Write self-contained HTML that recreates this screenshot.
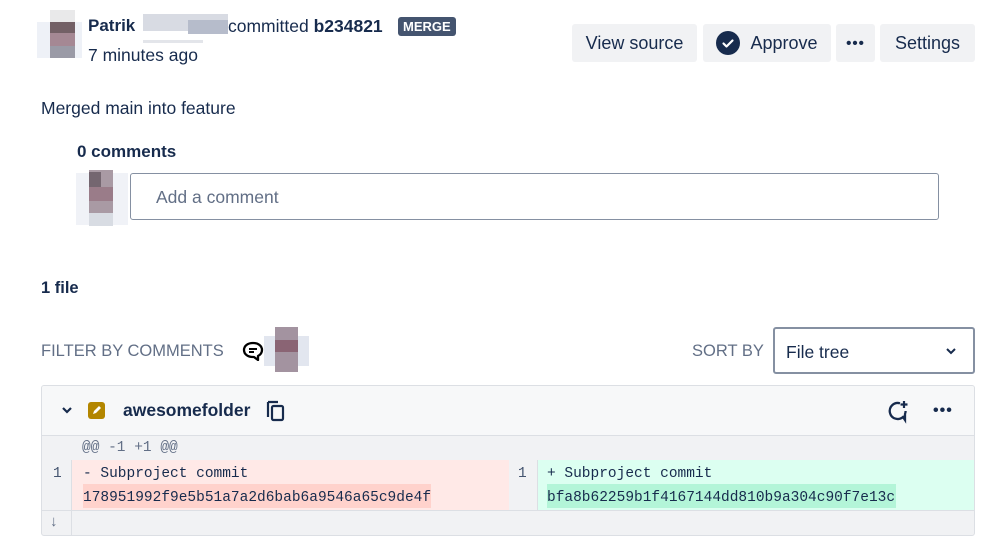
<!DOCTYPE html><html><head><meta charset="utf-8"><style>
*{box-sizing:border-box;margin:0;padding:0}
body{width:998px;height:557px;background:#fff;font-family:"Liberation Sans",sans-serif;color:#172b4d;position:relative;overflow:hidden}
.a{position:absolute}
.px{position:absolute}
.btn{position:absolute;top:24px;height:38px;background:#f1f2f4;border-radius:3px;font-size:18px;display:flex;align-items:center;justify-content:center;color:#172b4d}
.mono{font-family:"Liberation Mono",monospace;font-size:14.5px}
</style></head><body>
<div class="px" style="left:50px;top:10px;width:25px;height:12px;background:#e9e9ea"></div>
<div class="px" style="left:37px;top:22px;width:45px;height:36px;background:#eef1f7"></div>
<div class="px" style="left:50px;top:22px;width:25px;height:11px;background:#736066"></div>
<div class="px" style="left:50px;top:33px;width:25px;height:13px;background:#a58894"></div>
<div class="px" style="left:50px;top:46px;width:25px;height:12px;background:#9a9aa6"></div>
<div class="a" style="left:88px;top:16px;font-size:17px;font-weight:bold">Patrik</div>
<div class="px" style="left:143px;top:14px;width:85px;height:17px;background:#d8dbe3"></div>
<div class="px" style="left:188px;top:20px;width:40px;height:14px;background:#b6bccb"></div>
<div class="px" style="left:143px;top:40px;width:60px;height:3px;background:#e3e5ea"></div>
<div class="a" style="left:228px;top:16px;font-size:17.5px">committed <b>b234821</b></div>
<div class="a" style="left:398px;top:17px;height:19px;padding:0 5px;background:#44546f;color:#fff;border-radius:3px;font-size:13px;font-weight:bold;line-height:19px">MERGE</div>
<div class="a" style="left:88px;top:45px;font-size:17.5px">7 minutes ago</div>
<div class="btn" style="left:572px;width:125px">View source</div>
<div class="btn" style="left:703px;width:128px"><svg width="24" height="24" viewBox="0 0 24 24" style="margin-right:10px"><circle cx="12" cy="12" r="12" fill="#172b4d"/><path d="M7.5 12.5l3 3 6-6" stroke="#fff" stroke-width="2.2" fill="none" stroke-linecap="round" stroke-linejoin="round"/></svg>Approve</div>
<div class="btn" style="left:836px;width:39px;font-weight:bold;letter-spacing:1px;font-size:15px">•••</div>
<div class="btn" style="left:880px;width:95px">Settings</div>
<div class="a" style="left:41px;top:98px;font-size:17.5px">Merged main into feature</div>
<div class="a" style="left:77px;top:142px;font-size:17px;font-weight:bold">0 comments</div>
<div class="px" style="left:76px;top:173px;width:52px;height:52px;background:#f0f2f7"></div>
<div class="px" style="left:89px;top:170px;width:24px;height:56px;background:#a99aa4"></div>
<div class="px" style="left:89px;top:172px;width:12px;height:15px;background:#746670"></div>
<div class="px" style="left:89px;top:187px;width:24px;height:14px;background:#9a7c89"></div>
<div class="px" style="left:89px;top:213px;width:24px;height:13px;background:#d8dce3"></div>
<div class="a" style="left:130px;top:173px;width:809px;height:47px;border:1px solid #8590a2;border-radius:3px;font-size:17.5px;color:#626f86;padding:13px 0 0 25px">Add a comment</div>
<div class="a" style="left:41px;top:279px;font-size:16.5px;font-weight:bold">1 file</div>
<div class="a" style="left:41px;top:342px;font-size:16.5px;color:#626f86">FILTER BY COMMENTS</div>
<svg class="a" style="left:242px;top:341px" width="22" height="20" viewBox="0 0 22 20"><path d="M11 2C5.5 2 2 5 2 9s3.5 7 9 7h1l4 3v-4c2.5-1.3 4-3.4 4-6 0-4-3.5-7-9-7z" fill="none" stroke="#000" stroke-width="2.3" stroke-linejoin="round"/><path d="M7 8h8M7 11h5" stroke="#000" stroke-width="2"/></svg>
<div class="px" style="left:264px;top:336px;width:45px;height:30px;background:#e2e6ef"></div>
<div class="px" style="left:275px;top:327px;width:23px;height:45px;background:#a393a0"></div>
<div class="px" style="left:275px;top:340px;width:23px;height:12px;background:#8a6474"></div>
<div class="a" style="left:692px;top:342px;font-size:16.5px;color:#626f86">SORT BY</div>
<div class="a" style="left:773px;top:327px;width:202px;height:47px;border:2px solid #8590a2;border-radius:3px;font-size:17.5px;padding:13px 0 0 11px">File tree</div>
<svg class="a" style="left:945px;top:346px" width="12" height="10" viewBox="0 0 12 10"><path d="M2 3l4 4 4-4" stroke="#172b4d" stroke-width="2" fill="none"/></svg>
<div class="a" style="left:41px;top:385px;width:934px;height:151px;border:1px solid #dcdfe4;border-radius:3px;overflow:hidden;background:#f1f2f4">
 <div class="a" style="left:0;top:0;width:932px;height:50px;background:#f7f8f9;border-bottom:1px solid #dcdfe4"></div>
 <svg class="a" style="left:19px;top:19px" width="12" height="10" viewBox="0 0 12 10"><path d="M2 3l4 4 4-4" stroke="#172b4d" stroke-width="2.2" fill="none"/></svg>
 <div class="a" style="left:46px;top:16px;width:17px;height:17px;background:#b38600;border-radius:3px"></div>
 <svg class="a" style="left:49px;top:19px" width="11" height="11" viewBox="0 0 11 11"><path d="M2 9l1-3 5-5 2 2-5 5z" fill="#fff"/></svg>
 <div class="a" style="left:81px;top:14px;font-size:17.5px;font-weight:bold">awesomefolder</div>
 <svg class="a" style="left:223px;top:13px" width="22" height="24" viewBox="0 0 22 24"><path d="M3 3v15M3 3h10" stroke="#172b4d" stroke-width="2.2" fill="none"/><rect x="7" y="7" width="11" height="14" rx="1.5" stroke="#172b4d" stroke-width="2.2" fill="none"/></svg>
 <svg class="a" style="left:843px;top:12px" width="26" height="26" viewBox="0 0 26 26"><path d="M15 5.3A8 8 0 1 0 18 19l2 3v-6a8 8 0 0 0 .6-3" fill="none" stroke="#172b4d" stroke-width="2.3"/><path d="M19 3v7M15.5 6.5h7" stroke="#172b4d" stroke-width="2.2"/></svg>
 <div class="a" style="left:891px;top:16px;font-size:16px;font-weight:bold;letter-spacing:1px">•••</div>
 <div class="a mono" style="left:40px;top:54px;color:#626f86">@@ -1 +1 @@</div>
 <div class="a" style="left:0;top:74px;width:30px;height:50px;background:#f1f2f4;border-right:1px solid #dcdfe4"></div>
 <div class="a" style="left:30px;top:74px;width:437px;height:50px;background:#ffe9e7"></div>
 <div class="a" style="left:467px;top:74px;width:29px;height:50px;background:#f1f2f4;border-right:1px solid #dcdfe4"></div>
 <div class="a" style="left:496px;top:74px;width:437px;height:50px;background:#dcfff1"></div>
 <div class="a" style="left:41px;top:98px;width:348px;height:24px;background:#ffd2cc"></div>
 <div class="a" style="left:505px;top:98px;width:349px;height:24px;background:#b3f5d8"></div>
 <div class="a mono" style="left:11px;top:80px;color:#44546f">1</div>
 <div class="a mono" style="left:476px;top:80px;color:#44546f">1</div>
 <div class="a mono" style="left:41px;top:80px;line-height:24px;margin-top:-4px">- Subproject commit<br>178951992f9e5b51a7a2d6bab6a9546a65c9de4f</div>
 <div class="a mono" style="left:505px;top:80px;line-height:24px;margin-top:-4px">+ Subproject commit<br>bfa8b62259b1f4167144dd810b9a304c90f7e13c</div>
 <div class="a" style="left:0;top:124px;width:932px;height:1px;background:#dcdfe4"></div>
 <div class="a" style="left:29px;top:124px;width:1px;height:26px;background:#dcdfe4"></div>
 <div class="a" style="left:8px;top:127px;font-size:15px;color:#626f86">↓</div>
</div>
</body></html>
